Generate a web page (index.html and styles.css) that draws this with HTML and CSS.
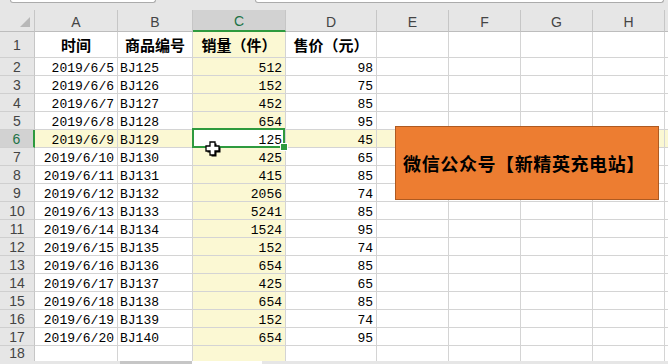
FILE: index.html
```html
<!DOCTYPE html>
<html lang="zh-CN">
<head>
<meta charset="utf-8">
<title>销量表</title>
<link rel="stylesheet" href="styles.css">
</head>
<body>
<div class="topbar">
  <div class="fbox namebox"></div>
  <div class="fbox formula"></div>
</div>
<div class="sheet">
  <div class="grid">
    <div class="corner"><span class="tri"></span></div>
    <div class="ch">A</div><div class="ch">B</div><div class="ch on">C</div><div class="ch">D</div>
    <div class="ch">E</div><div class="ch">F</div><div class="ch">G</div><div class="ch">H</div><div class="ch"></div>

    <div class="rh">1</div>
    <div class="c th">时间</div><div class="c th">商品编号</div><div class="c th hl">销量（件）</div><div class="c th">售价（元）</div>
    <div class="c"></div><div class="c"></div><div class="c"></div><div class="c"></div><div class="c"></div>

    <div class="rh">2</div>
    <div class="c r">2019/6/5</div><div class="c">BJ125</div><div class="c r hl">512</div><div class="c r">98</div>
    <div class="c"></div><div class="c"></div><div class="c"></div><div class="c"></div><div class="c"></div>

    <div class="rh">3</div>
    <div class="c r">2019/6/6</div><div class="c">BJ126</div><div class="c r hl">152</div><div class="c r">75</div>
    <div class="c"></div><div class="c"></div><div class="c"></div><div class="c"></div><div class="c"></div>

    <div class="rh">4</div>
    <div class="c r">2019/6/7</div><div class="c">BJ127</div><div class="c r hl">452</div><div class="c r">85</div>
    <div class="c"></div><div class="c"></div><div class="c"></div><div class="c"></div><div class="c"></div>

    <div class="rh">5</div>
    <div class="c r">2019/6/8</div><div class="c">BJ128</div><div class="c r hl">654</div><div class="c r">95</div>
    <div class="c"></div><div class="c"></div><div class="c"></div><div class="c"></div><div class="c"></div>

    <div class="rh on">6</div>
    <div class="c r hl">2019/6/9</div><div class="c hl">BJ129</div><div class="c r sel">125</div><div class="c r hl">45</div>
    <div class="c hl"></div><div class="c hl"></div><div class="c hl"></div><div class="c hl"></div><div class="c hl"></div>

    <div class="rh">7</div>
    <div class="c r">2019/6/10</div><div class="c">BJ130</div><div class="c r hl">425</div><div class="c r">65</div>
    <div class="c"></div><div class="c"></div><div class="c"></div><div class="c"></div><div class="c"></div>

    <div class="rh">8</div>
    <div class="c r">2019/6/11</div><div class="c">BJ131</div><div class="c r hl">415</div><div class="c r">85</div>
    <div class="c"></div><div class="c"></div><div class="c"></div><div class="c"></div><div class="c"></div>

    <div class="rh">9</div>
    <div class="c r">2019/6/12</div><div class="c">BJ132</div><div class="c r hl">2056</div><div class="c r">74</div>
    <div class="c"></div><div class="c"></div><div class="c"></div><div class="c"></div><div class="c"></div>

    <div class="rh">10</div>
    <div class="c r">2019/6/13</div><div class="c">BJ133</div><div class="c r hl">5241</div><div class="c r">85</div>
    <div class="c"></div><div class="c"></div><div class="c"></div><div class="c"></div><div class="c"></div>

    <div class="rh">11</div>
    <div class="c r">2019/6/14</div><div class="c">BJ134</div><div class="c r hl">1524</div><div class="c r">95</div>
    <div class="c"></div><div class="c"></div><div class="c"></div><div class="c"></div><div class="c"></div>

    <div class="rh">12</div>
    <div class="c r">2019/6/15</div><div class="c">BJ135</div><div class="c r hl">152</div><div class="c r">74</div>
    <div class="c"></div><div class="c"></div><div class="c"></div><div class="c"></div><div class="c"></div>

    <div class="rh">13</div>
    <div class="c r">2019/6/16</div><div class="c">BJ136</div><div class="c r hl">654</div><div class="c r">85</div>
    <div class="c"></div><div class="c"></div><div class="c"></div><div class="c"></div><div class="c"></div>

    <div class="rh">14</div>
    <div class="c r">2019/6/17</div><div class="c">BJ137</div><div class="c r hl">425</div><div class="c r">65</div>
    <div class="c"></div><div class="c"></div><div class="c"></div><div class="c"></div><div class="c"></div>

    <div class="rh">15</div>
    <div class="c r">2019/6/18</div><div class="c">BJ138</div><div class="c r hl">654</div><div class="c r">85</div>
    <div class="c"></div><div class="c"></div><div class="c"></div><div class="c"></div><div class="c"></div>

    <div class="rh">16</div>
    <div class="c r">2019/6/19</div><div class="c">BJ139</div><div class="c r hl">152</div><div class="c r">74</div>
    <div class="c"></div><div class="c"></div><div class="c"></div><div class="c"></div><div class="c"></div>

    <div class="rh">17</div>
    <div class="c r">2019/6/20</div><div class="c">BJ140</div><div class="c r hl">654</div><div class="c r">95</div>
    <div class="c"></div><div class="c"></div><div class="c"></div><div class="c"></div><div class="c"></div>

    <div class="rh last">18</div>
    <div class="c"></div><div class="c"></div><div class="c hl"></div><div class="c"></div>
    <div class="c"></div><div class="c"></div><div class="c"></div><div class="c"></div><div class="c"></div>
  </div>

  <!-- floating text box shape -->
  <div class="shape">微信公众号【新精英充电站】</div>

  <!-- cell-select mouse pointer -->
  <svg class="pointer" width="17" height="17" viewBox="0 0 17 17">
    <polygon points="6,2 11,2 11,6 15,6 15,11 11,11 11,15 6,15 6,11 2,11 2,6 6,6" fill="#000" transform="translate(1.5,1.5)"/>
    <polygon points="6,2 11,2 11,6 15,6 15,11 11,11 11,15 6,15 6,11 2,11 2,6 6,6" fill="#fff" stroke="#000" stroke-width="1.3" stroke-linejoin="miter"/>
  </svg>
</div>
<div class="tabs">
  <div class="seg s1"></div><div class="seg s2"></div><div class="seg s3"></div><div class="seg s4"></div>
</div>
</body>
</html>
```

FILE: styles.css
```css
* { box-sizing: border-box; }

body {
  margin: 0;
  width: 668px;
  height: 364px;
  overflow: hidden;
  background: #e6e6e6;
  font-family: "Liberation Sans", "Noto Sans CJK SC", sans-serif;
}

/* bottom edge of the name box and formula bar */
.topbar {
  height: 10px;
  display: flex;
  align-items: flex-start;
}
.fbox {
  height: 3px;
  background: #fff;
  border: 1px solid #ababab;
  border-top: 0;
  border-radius: 0 0 3px 3px;
}
.namebox { margin-left: 10px; width: 146px; }
.formula { margin-left: 99px; width: 409px; }

.sheet {
  position: relative;
  height: 351px;
  overflow: hidden;
}

.grid {
  display: grid;
  grid-template-columns: 35px 83px 75px 93px 91px 72px 72px 72px 72px 1fr;
  grid-template-rows: 22px 26px repeat(17, 18px);
  background: #fff;
}

/* headers */
.corner {
  background: #e6e6e6;
  border-right: 1px solid #c6c6c6;
  border-bottom: 1px solid #bdbdbd;
  display: flex;
  justify-content: flex-end;
  align-items: flex-end;
  padding: 0 4px 4px 0;
}
.tri {
  width: 0;
  height: 0;
  border-left: 10px solid transparent;
  border-bottom: 10px solid #b8b8b8;
}
.ch {
  background: #e6e6e6;
  border-right: 1px solid #c6c6c6;
  border-bottom: 1px solid #bdbdbd;
  color: #444;
  font-size: 14px;
  display: flex;
  align-items: center;
  justify-content: center;
  padding-top: 2px;
}
.ch.on {
  background: #d2d2d2;
  color: #217346;
  border-bottom: 2px solid #2e9a3e;
}
.rh {
  background: #e6e6e6;
  border-right: 1px solid #c6c6c6;
  border-bottom: 1px solid #cfcfcf;
  color: #444;
  font-size: 14px;
  line-height: 15px;
  display: flex;
  align-items: center;
  justify-content: center;
  padding-top: 1px;
}
/* last row is only partly visible above the tab strip */
.rh.last { padding: 0 0 3px; }
.rh.on {
  background: #d2d2d2;
  color: #217346;
  border-right: 2px solid #2e9a3e;
}

/* cells */
.c {
  border-right: 1px solid #d4d4d4;
  border-bottom: 1px solid #d4d4d4;
  font-family: "Liberation Mono", monospace;
  font-size: 13px;
  line-height: 14px;
  padding: 4px 2px 0 2px;
  white-space: nowrap;
  color: #000;
}
.c.r { text-align: right; padding-right: 3px; }
.c.th {
  font-family: "Noto Sans CJK SC", sans-serif;
  font-weight: 700;
  font-size: 15px;
  padding: 0;
  display: flex;
  align-items: center;
  justify-content: center;
}
.hl { background: #fbf8d3; }

.sel {
  position: relative;
  background: #fff;
}
.sel::after {
  content: "";
  position: absolute;
  top: -2px;
  left: -1px;
  right: 0;
  bottom: -1px;
  border: 2px solid #2e9a3e;
}
.sel::before {
  content: "";
  position: absolute;
  right: -3px;
  bottom: -4px;
  width: 6px;
  height: 6px;
  background: #2e9a3e;
  border: 1px solid #fff;
  z-index: 2;
}

/* floating text box */
.shape {
  position: absolute;
  left: 395px;
  top: 116px;
  width: 264px;
  height: 74px;
  background: #ed7d31;
  border: 1px solid #ae5a21;
  display: flex;
  align-items: center;
  justify-content: center;
  font-family: "Noto Sans CJK SC", sans-serif;
  font-weight: 700;
  font-size: 18px;
  letter-spacing: 0.6px;
  color: #000;
  padding-right: 6px;
}

.pointer {
  position: absolute;
  left: 204px;
  top: 130px;
}

/* sheet tab strip */
.tabs {
  height: 3px;
  display: flex;
}
.seg { height: 3px; }
.s1 { width: 120px; background: #e6e6e6; }
.s2 { width: 72px; background: #c6c6c6; }
.s3 { width: 70px; background: #fff; }
.s4 { flex: 1; background: #e6e6e6; }
```
